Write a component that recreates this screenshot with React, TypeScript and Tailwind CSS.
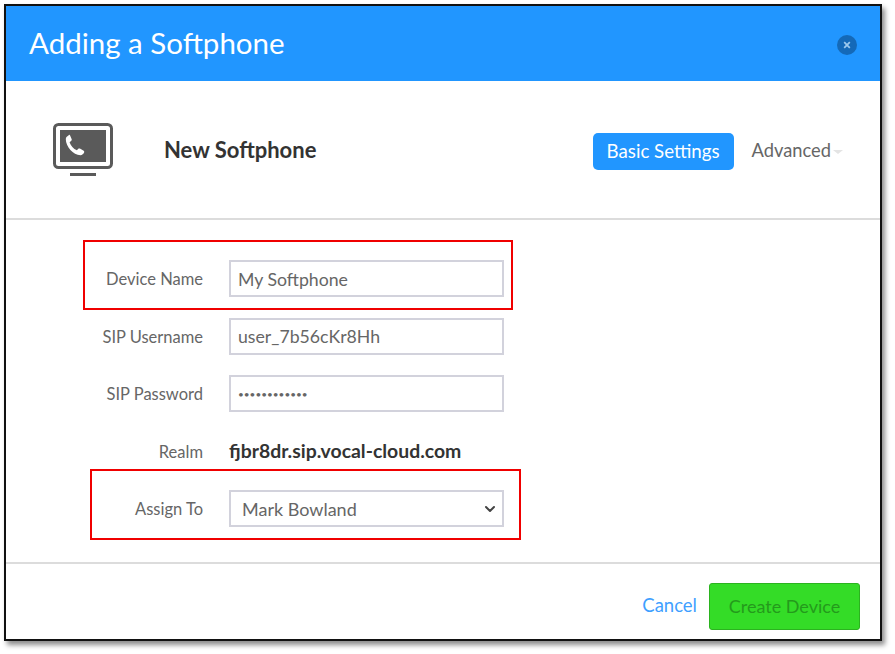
import React from 'react';
import { ChevronDown } from 'lucide-react';

const font = 'font-["Lato","Noto_Sans",sans-serif]';

const Row = ({ label, children }: { label: string; children: React.ReactNode }) => (
  <div className="relative flex h-[37px] items-center">
    <div className="mt-[2px] w-[197px] text-right text-[16.5px] text-[#666666]">{label}</div>
    <div className="ml-[26px] w-[275px]">{children}</div>
  </div>
);

const Input = ({ value, type = 'text' }: { value: string; type?: string }) => (
  <input
    readOnly
    type={type}
    value={value}
    className={`h-[37px] w-full border-2 border-[#d2d2dc] bg-white pl-[7px] pr-2 pt-px text-[#666666] outline-none ${
      type === 'password' ? 'text-[10px]' : 'text-[17.7px]'
    }`}
  />
);

const App: React.FC = () => {
  return (
    <div className={`h-[654px] w-[895px] overflow-hidden bg-white pl-1 pt-1 ${font}`}>
      <div className="h-[637px] w-[878px] border-2 border-[#111111] bg-white shadow-[3px_4px_5px_rgba(0,0,0,0.45)]">
        <div className="flex h-[75px] items-center justify-between bg-[#2196ff] pl-[23px] pr-[23px]">
          <h1 className="text-[29.5px] text-white">Adding a Softphone</h1>
          <div className="mt-[2px] flex h-5 w-5 items-center justify-center rounded-full bg-[#1469b8]">
            <svg viewBox="0 0 10 10" className="h-2 w-2" fill="none" stroke="#9cc9ee" strokeWidth="2.2">
              <path d="M1.5 1.5l7 7M8.5 1.5l-7 7" />
            </svg>
          </div>
        </div>

        <div className="flex h-[139px] items-center border-b-2 border-[#dcdcdc] pl-[47px] pr-[37px]">
          <svg viewBox="0 0 60 54" className="h-[54px] w-[60px]">
            <rect x="1.500" y="1.500" width="57" height="43" rx="4" fill="#fff" stroke="#5a5a5a" strokeWidth="3" />
            <rect x="7" y="7" width="46" height="32" fill="#5a5a5a" />
            <rect x="17" y="50" width="26" height="3" fill="#5a5a5a" />
            <path
              d="M15.500 12.500c-1.600.7-2.700 2-2.700 3.700 0 7 7.500 16 14.600 16 1.800 0 3.100-1.200 3.800-2.900.2-.6 0-1.200-.5-1.500l-3.800-2.200c-.6-.3-1.200-.2-1.600.2l-1.400 1.500c-3.500-1.500-6.200-4.600-7.300-8.100l1.700-1.400c.5-.4.600-1 .4-1.600l-1.600-3.800c-.3-.5-.7-.7-1.300-.4z"
              fill="#fff"
            />
          </svg>
          <div className="ml-[51px] text-[22px] font-bold text-[#333333]">New Softphone</div>
          <div className="ml-auto mt-[3px] flex items-center">
            <button className="h-[37px] w-[141px] rounded-[5px] bg-[#2196ff] text-[18.7px] text-white">Basic Settings</button>
            <div className="ml-[18px] text-[18.3px] text-[#666666]">Advanced</div>
            <div className="ml-[2px] mt-[2px] h-0 w-0 border-x-[5px] border-t-4 border-x-transparent border-t-[#e4e4e4]" />
          </div>
        </div>

        <div className="flex h-[344px] flex-col gap-[20.5px] border-b-2 border-[#dcdcdc] pt-[40px]">
          <Row label="Device Name">
            <Input value="My Softphone" />
            <div className="absolute left-[77px] top-[-20px] h-[70px] w-[430px] border-2 border-[#f00000]" />
          </Row>
          <Row label="SIP Username">
            <Input value="user_7b56cKr8Hh" />
          </Row>
          <Row label="SIP Password">
            <Input value="password1234" type="password" />
          </Row>
          <Row label="Realm">
            <div className="text-[19.4px] font-bold text-[#333333]">fjbr8dr.sip.vocal-cloud.com</div>
          </Row>
          <Row label="Assign To">
            <div className="flex h-[37px] w-full items-center justify-between border-2 border-[#d2d2dc] bg-white pl-[11px] pr-1 pt-px text-[18px] text-[#666666]">
              <span>Mark Bowland</span>
              <ChevronDown size={16} strokeWidth={3} className="text-[#444444]" />
            </div>
            <div className="absolute left-[84px] top-[-21px] h-[71px] w-[431px] border-2 border-[#f00000]" />
          </Row>
        </div>

        <div className="flex items-start justify-end pr-5 pt-[19px]">
          <a className="mt-[9px] text-[18.500px] text-[#3f9fff]">Cancel</a>
          <button className="ml-[12px] h-[47px] w-[151px] rounded-[3px] border border-[#2bb31f] bg-[#34dc27] text-[18px] text-[#249a1c]">
            Create Device
          </button>
        </div>
      </div>
    </div>
  );
};

export default App;
